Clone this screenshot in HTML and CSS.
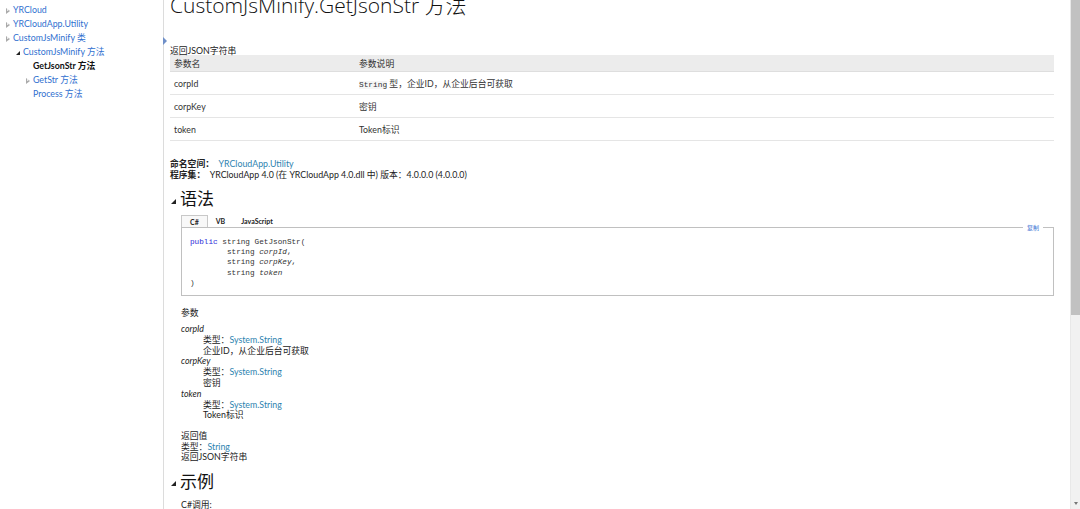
FILE: index.html
```html
<!DOCTYPE html>
<html lang="zh-CN">
<head>
<meta charset="utf-8">
<title>CustomJsMinify.GetJsonStr 方法</title>
<link rel="stylesheet" href="styles.css">
</head>
<body>
<div class="page">
  <nav class="toc">
    <div class="toc-item lvl1"><span class="tri open-no"></span><a>YRCloud</a></div>
    <div class="toc-item lvl1"><span class="tri open-no"></span><a>YRCloudApp.Utility</a></div>
    <div class="toc-item lvl1"><span class="tri open-no"></span><a>CustomJsMinify 类</a></div>
    <div class="toc-item lvl2"><span class="tri expanded"></span><a>CustomJsMinify 方法</a></div>
    <div class="toc-item lvl3 current"><span class="tri none"></span><span>GetJsonStr 方法</span></div>
    <div class="toc-item lvl3"><span class="tri open-no"></span><a>GetStr 方法</a></div>
    <div class="toc-item lvl3"><span class="tri none"></span><a>Process 方法</a></div>
  </nav>
  <div class="divider">
    <svg class="grip" width="4" height="8" viewBox="0 0 4 8"><path d="M0 0 L4 4 L0 8 Z" fill="#6f8fc8"/></svg>
  </div>
  <main class="content">
    <h1 class="title">CustomJsMinify.GetJsonStr 方法</h1>
    <p class="summary">返回JSON字符串</p>
    <table class="params">
      <thead>
        <tr><th class="c1">参数名</th><th>参数说明</th></tr>
      </thead>
      <tbody>
        <tr><td>corpId</td><td><code class="inl">String</code> 型，企业ID，从企业后台可获取</td></tr>
        <tr><td>corpKey</td><td>密钥</td></tr>
        <tr><td>token</td><td>Token标识</td></tr>
      </tbody>
    </table>

    <div class="meta">
      <div><b>命名空间：</b>&nbsp; <a class="lnk">YRCloudApp.Utility</a></div>
      <div><b>程序集：</b>&nbsp; YRCloudApp 4.0 (在 YRCloudApp 4.0.dll 中) 版本：4.0.0.0 (4.0.0.0)</div>
    </div>

    <h2 class="sec"><svg class="sec-tri" width="5" height="5" viewBox="0 0 5 5"><path d="M5 0 L5 5 L0 5 Z" fill="#222"/></svg>语法</h2>
    <div class="codeblock">
      <div class="tabs">
        <span class="tab active">C#</span>
        <span class="tab">VB</span>
        <span class="tab">JavaScript</span>
      </div>
      <div class="codebox">
        <span class="copy">复制</span>
<pre><span class="kw">public</span> string GetJsonStr(
        string <i>corpId</i>,
        string <i>corpKey</i>,
        string <i>token</i>
)</pre>
      </div>
    </div>

    <div class="sub">
      <div class="sub-title">参数</div>
      <dl class="plist">
        <dt>corpId</dt>
        <dd>类型：<a class="lnk">System.String</a><br>企业ID，从企业后台可获取</dd>
        <dt>corpKey</dt>
        <dd>类型：<a class="lnk">System.String</a><br>密钥</dd>
        <dt>token</dt>
        <dd>类型：<a class="lnk">System.String</a><br>Token标识</dd>
      </dl>
    </div>

    <div class="ret">
      <div>返回值</div>
      <div>类型：<a class="lnk">String</a></div>
      <div>返回JSON字符串</div>
    </div>

    <h2 class="sec"><svg class="sec-tri" width="5" height="5" viewBox="0 0 5 5"><path d="M5 0 L5 5 L0 5 Z" fill="#222"/></svg>示例</h2>
    <div class="example">C#调用:</div>
  </main>
  <div class="scrollbar">
    <div class="thumb"></div>
    <div class="track"><span class="arrow"></span></div>
  </div>
</div>
</body>
</html>
```

FILE: styles.css
```css
html, body {
  margin: 0;
  padding: 0;
  height: 509px;
  overflow: hidden;
  background: #fff;
}
body {
  font-family: "Lato", "Noto Sans CJK SC", sans-serif;
  font-size: 8.8px;
  color: #222;
}
.page {
  display: flex;
  height: 509px;
}
.toc {
  width: 163px;
  flex: none;
  padding-top: 3px;
}
.toc-item {
  display: flex;
  align-items: center;
  height: 14px;
  line-height: 14px;
  white-space: nowrap;
}
.toc-item a {
  color: #2f6fcf;
}
.lvl1 { padding-left: 6px; }
.lvl2 { padding-left: 16px; }
.lvl3 { padding-left: 26px; }
.current span:last-child {
  font-weight: bold;
  color: #111;
}
.tri {
  width: 7px;
  flex: none;
  height: 7px;
  display: inline-block;
  position: relative;
}
.tri.open-no::before {
  content: "";
  position: absolute;
  left: 0;
  top: 1px;
  border-left: 4px solid #aaa;
  border-top: 3px solid transparent;
  border-bottom: 3px solid transparent;
}
.tri.open-no::after {
  content: "";
  position: absolute;
  left: 1px;
  top: 2.5px;
  border-left: 2px solid #fff;
  border-top: 1.5px solid transparent;
  border-bottom: 1.5px solid transparent;
}
.tri.expanded::before {
  content: "";
  position: absolute;
  left: 0;
  top: 2px;
  border-right: 4px solid #222;
  border-top: 4px solid transparent;
}
.divider {
  width: 1px;
  flex: none;
  background: #dcdcdc;
  position: relative;
}
.grip {
  position: absolute;
  left: 0;
  top: 37px;
}
.content {
  flex: 1;
  min-width: 0;
  padding: 0 17px 0 6px;
}
.title {
  font-family: "Open Sans", "Noto Sans CJK SC", sans-serif;
  font-size: 21px;
  font-weight: 300;
  margin: -9px 0 0 0;
  line-height: 28px;
  color: #111;
  white-space: nowrap;
}
.summary {
  margin: 27px 0 0 0;
  line-height: 10px;
}
.params {
  width: 884px;
  border-collapse: collapse;
  margin-top: -1px;
}
.params th {
  background: #ececec;
  font-weight: normal;
  text-align: left;
  height: 16px;
  padding: 0 4px;
  border-bottom: 1px solid #dedede;
  color: #333;
}
.params th.c1 { width: 177px; }
.params td {
  height: 22px;
  padding: 0 4px;
  border-bottom: 1px solid #e5e5e5;
  color: #333;
}
code.inl {
  font-family: "Liberation Mono", monospace;
  font-size: 7.8px;
  color: #333;
  background: #f5f5f5;
}
.meta {
  margin-top: 17px;
  line-height: 11px;
}
.meta b { font-weight: bold; }
a.lnk { color: #2e83b0; }
.sec {
  font-size: 17px;
  font-weight: normal;
  margin: 8px 0 0 0;
  line-height: 22px;
  display: flex;
  align-items: center;
  color: #111;
}
.sec-tri {
  margin: 0 4px 0 1px;
  position: relative;
  top: 2px;
}
.codeblock {
  margin: 5px 0 0 11px;
  width: 873px;
}
.tabs {
  display: flex;
  height: 12px;
  font-size: 7px;
  font-weight: bold;
  line-height: 12px;
}
.tab {
  padding: 0 8px;
  color: #222;
}
.tab.active {
  border: 1px solid #c8c8c8;
  border-bottom: none;
  background: #f8f8f8;
  padding: 0 8px;
}
.codebox {
  border: 1px solid #c0c0c0;
  height: 69px;
  position: relative;
  padding: 9px 0 0 8px;
  box-sizing: border-box;
}
.copy {
  position: absolute;
  right: 10px;
  top: -4px;
  background: #fff;
  padding: 0 4px;
  font-size: 6px;
  line-height: 7px;
  color: #3b74d4;
}
.codebox pre {
  margin: 0;
  font-family: "Liberation Mono", monospace;
  font-size: 7.7px;
  line-height: 10.2px;
  color: #333;
}
.codebox pre i { color: #333; }
.kw { color: #2a2ad8; }
.sub {
  margin: 11px 0 0 11px;
}
.sub-title {
  line-height: 11px;
}
.plist {
  margin: 6px 0 0 0;
  line-height: 10.8px;
}
.plist dt {
  font-style: italic;
}
.plist dd {
  margin-left: 22px;
}
.ret {
  margin: 10px 0 0 11px;
  line-height: 10.5px;
}
.example {
  margin: 6px 0 0 11px;
  line-height: 11px;
}
.scrollbar {
  width: 9px;
  flex: none;
  margin-left: 0;
  display: flex;
  flex-direction: column;
  border-left: 1px solid #e8e8e8;
}
.thumb {
  height: 315px;
  background: #c1c1c1;
}
.track {
  flex: 1;
  background: #f1f1f1;
  display: flex;
  align-items: flex-end;
  justify-content: center;
  padding-bottom: 4px;
}
.arrow {
  width: 0;
  height: 0;
  border-top: 3px solid #777;
  border-left: 2.5px solid transparent;
  border-right: 2.5px solid transparent;
}
```
